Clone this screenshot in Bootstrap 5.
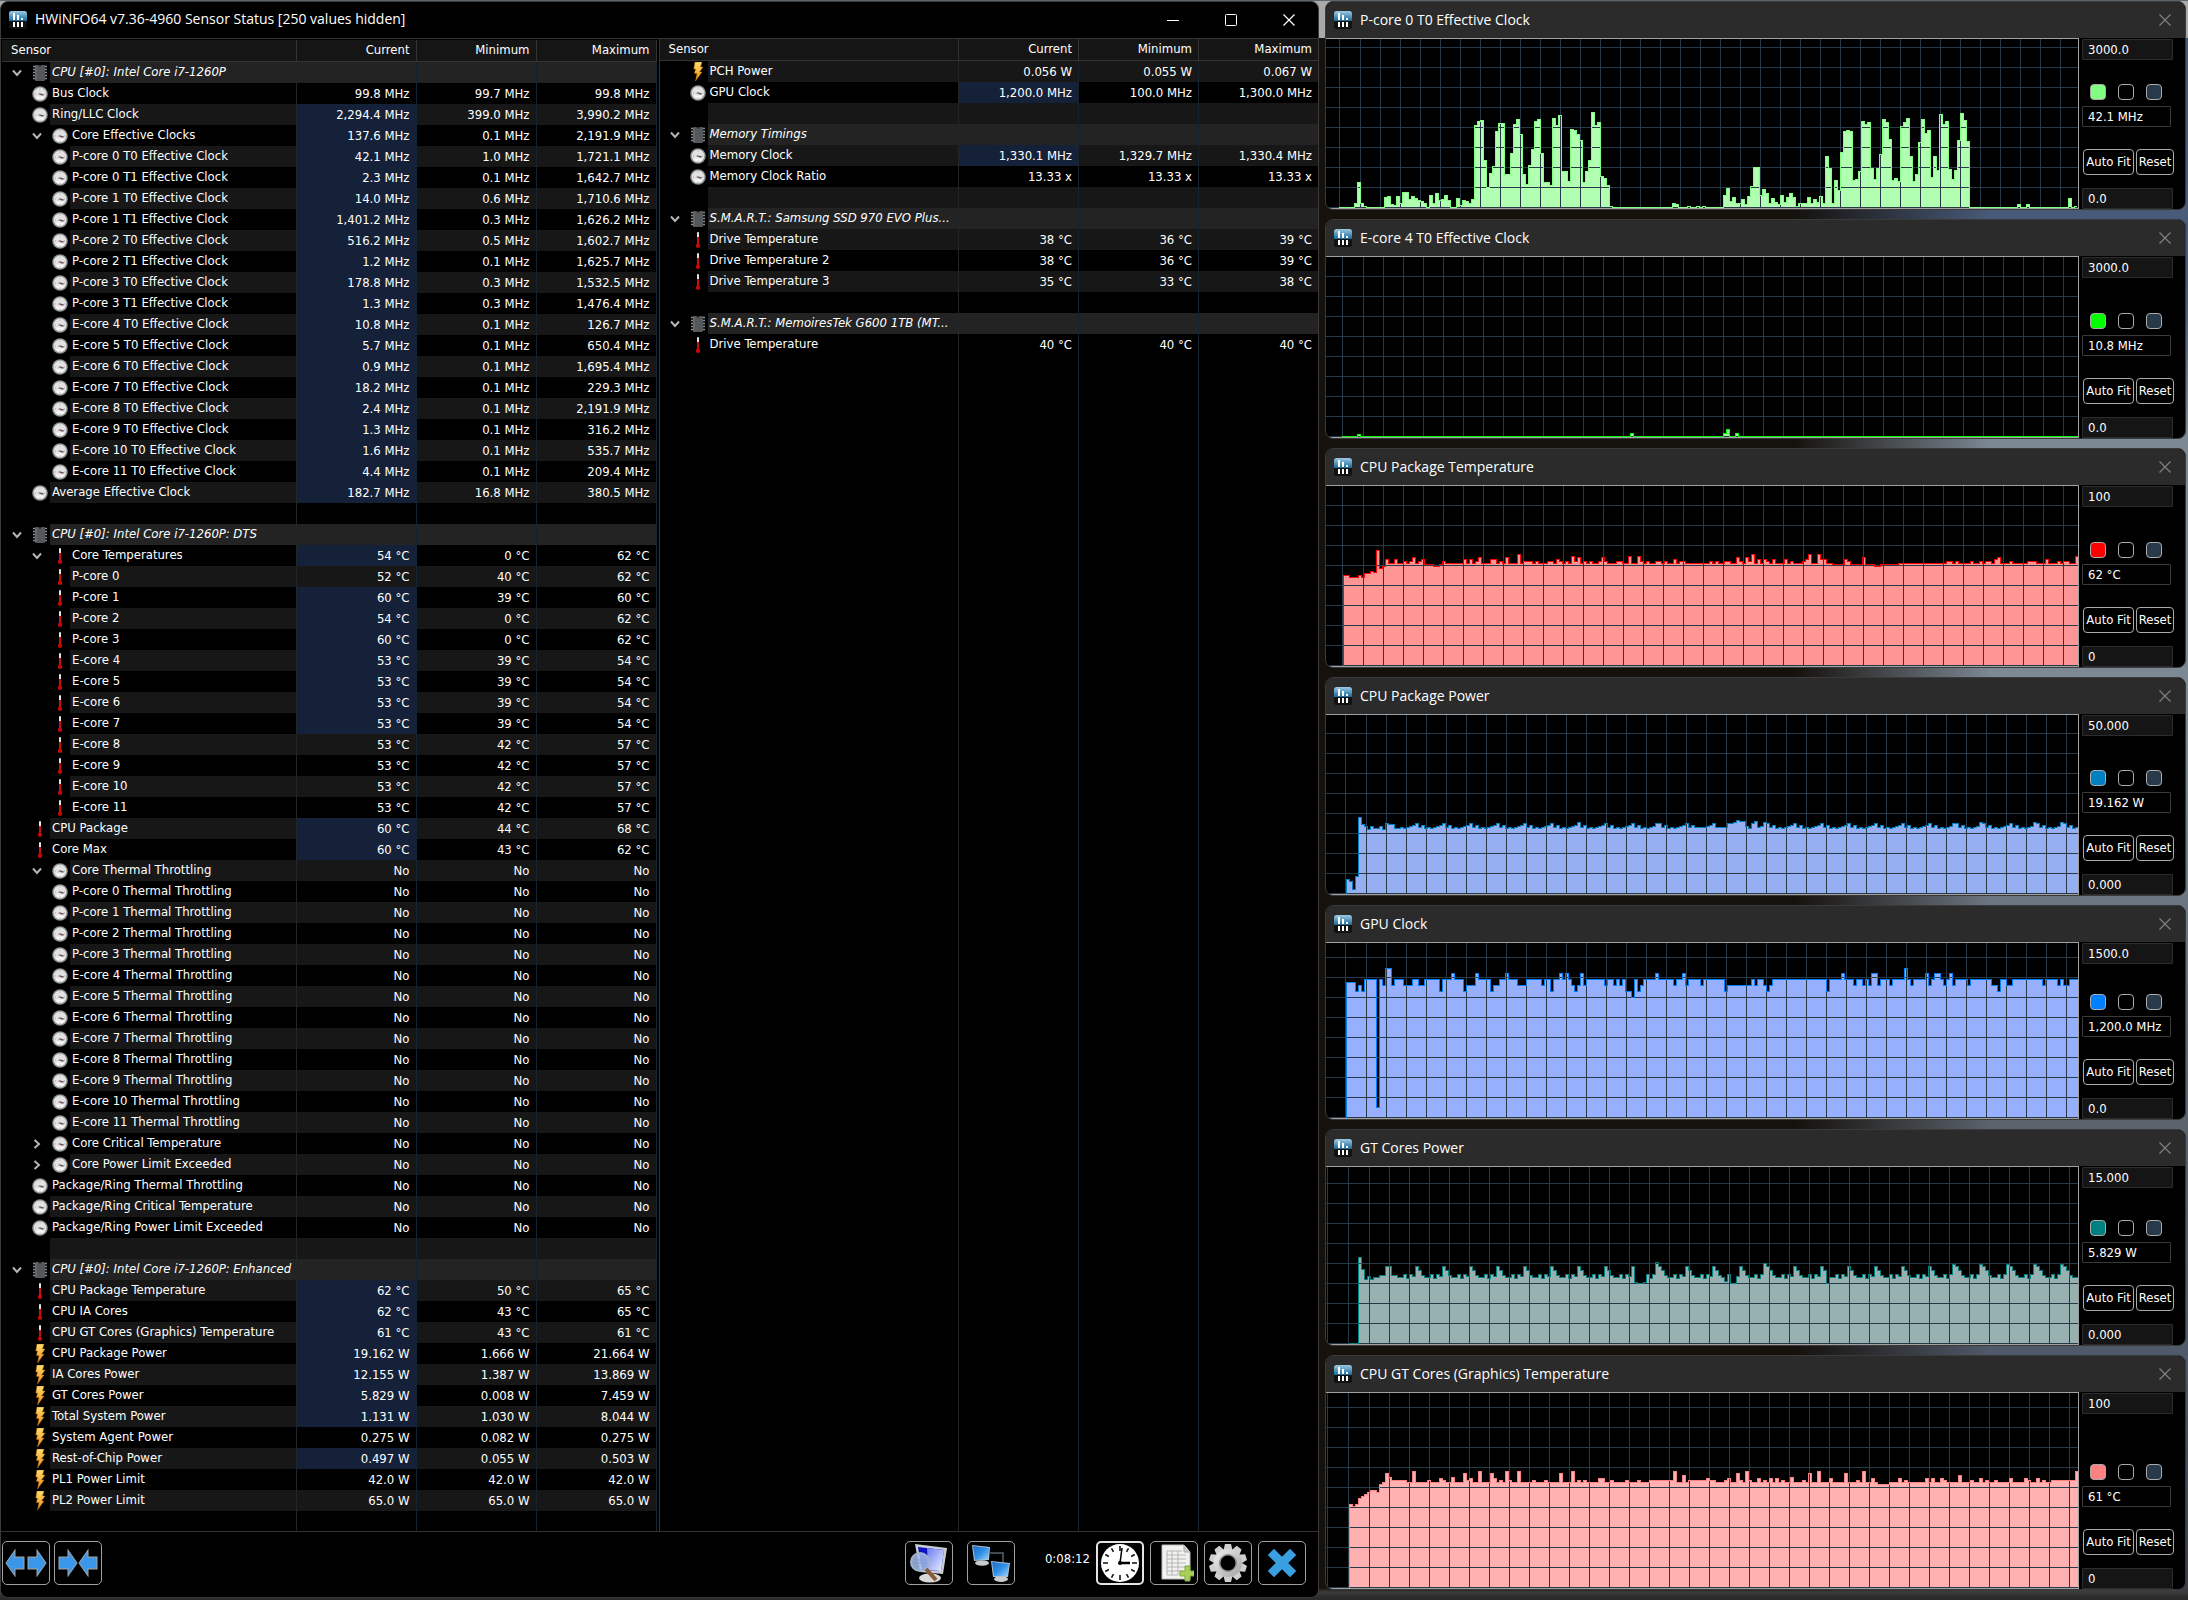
<!DOCTYPE html>
<html lang="en" data-bs-theme="dark">
<head>
<meta charset="utf-8">
<meta name="viewport" content="width=device-width, initial-scale=1">
<title>HWiNFO64 Sensor Status</title>
<link href="https://cdn.jsdelivr.net/npm/bootstrap@5.3.0/dist/css/bootstrap.min.css" rel="stylesheet">
<style>
:root{--ui:"DejaVu Sans Condensed","Noto Sans",sans-serif;--cap:"Open Sans","Noto Sans",sans-serif;--line:#333;--grid:#263847}
body{font-family:var(--ui);font-size:13px;line-height:20px;color:#fff;min-height:100vh;
  background:
   linear-gradient(#5d666c,#5d666c) 0 0/100% 1px no-repeat,
   linear-gradient(90deg,#a9a9a9,#a9a9a9) 0 0/100% 38px no-repeat,
   linear-gradient(#0000 0 1588px,#3c3c3c 1592px,#2a2a2a 1598px),
   linear-gradient(90deg,#15110d 0 82%,#15110d00 91%),
   linear-gradient(180deg,#44587a 90px,#4a5c78 300px,#7c8894 440px,#7c8894 700px,#5a626c 1130px,#50596a 1360px,#3c3c40 1600px)}
.desk{display:grid;grid-template-columns:minmax(0,1319fr) minmax(0,861fr);gap:6px;padding:1px 2px 0 0;align-items:start}
.win{background:#000;border:1px solid #3a3a3a;border-radius:8px;overflow:hidden}
.capbar{height:36px;font:14px/20px var(--cap);padding-left:8px}
.capbar h1,.capbar h2{font:inherit;margin:0}
.capbar h1{padding-bottom:2px}
.capbtn{background:none;border:0;padding:0 0 2px;color:inherit;height:36px}
.main-cap{color:#fff}
.main-cap .capbtn{width:58px}
.sub-cap{background:#2b2b2b;color:#808080}
.sub-cap .capbtn{width:40px}
.panes{border-top:1px solid var(--line);border-bottom:1px solid var(--line)}
.pane{flex:1 1 0;min-width:0}
.pane-a{flex:0 0 50%;padding:1px 2px 0 1px;border-right:1px solid var(--line)}
.sens{width:100%;height:100%;table-layout:fixed;border-collapse:separate;border-spacing:0}
.sens th{height:22px;background:#151515;border-right:1px solid var(--line);border-bottom:1px solid var(--line);font-weight:400;padding:0 6px 2px 9px;line-height:18px;text-align:right;width:120px}
.sens th:first-child{width:auto;text-align:left}
.sens td{height:21px;padding:0 6px 0 0;line-height:20px;border-right:1px solid #16222c;text-align:right;white-space:nowrap;overflow:hidden}
.sens td:first-child{padding:0;text-align:left;border-right-color:#20272c}
.sens tr.odd td:not(:first-child),.sens tr.odd .lbl{background:#171717}
.sens tr.grp td:not(:first-child),.sens tr.grp .lbl{background:#232323}
.sens tr.grp .lbl{font-style:italic}
.sens tr td.hot,.sens tr.odd td.hot{background:#152138}
.sens .fill td{height:auto}
#right th:last-child{width:119px}
#right th:last-child,#right td:last-child{border-right:0}
.spare{height:20px}
.gut{width:48px;padding-right:2px;flex:none}
.gut.deep{width:68px}
.lbl{height:21px;padding-left:2px;overflow:hidden}
.expander{background:none;border:0;padding:0;width:10px;height:20px;margin-right:10px;display:flex;align-items:center;color:#b5b5b5}
.tools{height:65px;padding:9px 12px 0 1px}
.toolset{gap:6px}
.toolbtn{width:48px;height:44px;background:#000;border:1px solid #a0a0a0;border-radius:5px;padding:0;display:flex;align-items:center;justify-content:center}
.toolbtn.lit{border:2px solid #e4e4e4}
.clockt{margin:8px 0 0 24px}
.rack{display:flex;flex-direction:column;gap:9px}
.h-a{height:209px}.h-b{height:220px}.h-c{height:219px}.h-d{height:215px}.h-e{height:217px}.h-f{height:235px}
.plot{flex:1 1 0;min-width:0;border:1px solid #a0a0a0;border-left:0}
.plot svg{display:block;width:100%;height:100%}
.ctl{width:106px;flex:none;padding:1px 0 0 3px}
.fld{width:91px;height:21px;background:#151515;border:1px solid #2c2c2c;border-radius:1px;color:#fff;padding:0 5px;font:13px/18px var(--ui)}
.fld.now{width:89px;background:#000;border-color:#3a3a3a;margin:6px 0 22px}
.sws{gap:12px}
.sw{width:16px;height:16px;border:1px solid #aaa;border-radius:4px;padding:0;background:#000}
.sw.gridc{background:#283a49}
.fitrow{gap:2px;margin-bottom:13px;padding-left:1px}
.mini{height:26px;border:1px solid #aaa;border-radius:4px;background:#000;color:#fff;padding:0;font:13px/22px var(--ui);white-space:nowrap}
.mini.fit{width:51px}.mini.rst{width:38px}
</style>
</head>
<body>
<svg width="0" height="0" class="position-absolute" aria-hidden="true">
 <defs>
  <linearGradient id="gBlue" x1="0" y1="0" x2="0" y2="1"><stop offset="0" stop-color="#9cc8e4"/><stop offset="1" stop-color="#176a9c"/></linearGradient>
  <linearGradient id="gGold" x1="0" y1="0" x2="0" y2="1"><stop offset="0" stop-color="#ffe070"/><stop offset="1" stop-color="#f08a10"/></linearGradient>
  <linearGradient id="gMon" x1="0" y1="0" x2="1" y2="1"><stop offset="0" stop-color="#1e6fc8"/><stop offset=".5" stop-color="#2f8fe6"/><stop offset="1" stop-color="#9fd4fa"/></linearGradient>
  <linearGradient id="gScr" x1="0" y1="0" x2="1" y2="1"><stop offset="0" stop-color="#6c7cf0"/><stop offset="1" stop-color="#eef2ff"/></linearGradient>
  <linearGradient id="gSteel" x1="0" y1="0" x2="1" y2="1"><stop offset="0" stop-color="#f2f2f2"/><stop offset="1" stop-color="#a2a2a2"/></linearGradient>
  <symbol id="i-app" viewBox="0 0 18 18"><rect width="18" height="18" rx="2.500" fill="#111"/><path d="M0 10V2.500A2.500 2.500 0 0 1 2.500 0h13A2.500 2.500 0 0 1 18 2.500V10z" fill="url(#gBlue)"/><path d="M4 2h2v7H4zM8 4h2v5H8zM12 7h2v2h-2zM4 11h2v5H4zM8 11h2v5H8zM12 11h2v5h-2z" fill="#fff"/></symbol>
  <symbol id="i-clock" viewBox="0 0 16 16"><circle cx="8" cy="8" r="7.800" fill="#8d8d8d"/><circle cx="8" cy="8" r="6.400" fill="#e2e2e2"/><path d="M3.500 10.500a5 5 0 0 0 9 0" fill="#f8f8f8"/><path d="M7 8l4.500 1" stroke="#705040" stroke-width="1.300" fill="none"/><circle cx="7.500" cy="8" r="1" fill="#999"/><path d="M8 2.500v1M3 8h1M12 8h1M8 12.500v1" stroke="#999" stroke-width=".8"/></symbol>
  <symbol id="i-temp" viewBox="0 0 16 16"><rect x="7" y="0" width="2" height="6" rx="1" fill="#e4e4e4"/><rect x="7" y="5" width="2" height="9" fill="#c81010"/><circle cx="8" cy="13.700" r="2.200" fill="#c40808"/></symbol>
  <symbol id="i-bolt" viewBox="0 0 16 19"><path d="M5 0h7l-1.500 5H13L9.500 10H12L5.500 19 7 11.500H4.500L5.500 7H3.800z" fill="url(#gGold)" stroke="#b86a10" stroke-width=".5"/></symbol>
  <symbol id="i-chip" viewBox="0 0 16 16"><path d="M1 1.500h14M1 4.500h14M1 7.500h14M1 10.500h14M1 13.500h14" stroke="#8b8b8b" stroke-width="1.400"/><rect x="3" y="0" width="10" height="16" rx="1" fill="#55585b"/><path d="M6.500 0a1.500 1.500 0 0 0 3 0z" fill="#222"/><path d="M4 1v14" stroke="#777"/></symbol>
  <symbol id="i-down" viewBox="0 0 10 10"><path d="M1 2.500l4 4.500 4-4.500" fill="none" stroke="currentColor" stroke-width="2"/></symbol>
  <symbol id="i-right" viewBox="0 0 10 10"><path d="M2.500 1l4.500 4-4.500 4" fill="none" stroke="currentColor" stroke-width="2"/></symbol>
  <symbol id="i-x" viewBox="0 0 12 12"><path d="M.5.5l11 11M11.500.5l-11 11" fill="none" stroke="currentColor" stroke-width="1.200"/></symbol>
 </defs>
</svg>

<div class="desk">
 <main class="win">
  <header class="capbar main-cap d-flex align-items-center">
   <svg width="18" height="18" aria-hidden="true"><use href="#i-app"/></svg>
   <h1 class="ms-2 me-auto">HWiNFO64 v7.36-4960 Sensor Status [250 values hidden]</h1>
   <button class="capbtn" aria-label="Minimize"><svg width="12" height="12"><path d="M0 6.500h12" stroke="#fff"/></svg></button>
   <button class="capbtn" aria-label="Maximize"><svg width="12" height="12"><rect x=".5" y=".5" width="11" height="11" rx="1" fill="none" stroke="#fff"/></svg></button>
   <button class="capbtn" aria-label="Close"><svg width="12" height="12"><use href="#i-x"/></svg></button>
  </header>
  <div class="panes d-flex">
   <section class="pane pane-a"><table class="sens" id="left"></table></section>
   <section class="pane"><table class="sens" id="right"></table></section>
  </div>
  <footer class="tools d-flex align-items-start">
   <button class="toolbtn" aria-label="Expand columns"><svg width="42" height="28" viewBox="0 0 42 24" preserveAspectRatio="none"><path d="M1 12L10 1v6h9v10h-9v6zM41 12L32 1v6h-9v10h9v6z" fill="#3a96e8" stroke="#9aa6b0"/></svg></button>
   <button class="toolbtn ms-1" aria-label="Shrink columns"><svg width="42" height="28" viewBox="0 0 42 24" preserveAspectRatio="none"><path d="M20 12L11 1v6H2v10h9v6zM22 12L31 1v6h9v10h-9v6z" fill="#3a96e8" stroke="#9aa6b0"/></svg></button>
   <div class="toolset ms-auto d-flex align-items-start">
    <button class="toolbtn me-2" aria-label="System summary"><svg width="38" height="40" viewBox="0 0 38 40"><ellipse cx="20" cy="35" rx="11" ry="4.500" fill="#d8d8d8"/><path d="M5 1l32 4-4 26-23-2z" fill="#c9ccd0"/><path d="M8 4l26 3-3 21-19-1z" fill="#0d10c0"/><path d="M17 5l17 2-3 21-13-1z" fill="url(#gScr)"/><circle cx="10" cy="19" r="9" fill="#a6bde8" fill-opacity=".85" stroke="#9fb4cc" stroke-width="2"/><path d="M16 26l10 11" stroke="#8a5a34" stroke-width="4"/><path d="M5 17h8M4 20h10" stroke="#7f98d8"/></svg></button>
    <button class="toolbtn" aria-label="Remote monitoring"><svg width="40" height="40" viewBox="0 0 40 40"><path d="M19 10h13v10" fill="none" stroke="#56616c" stroke-width="1.500"/><ellipse cx="11" cy="20" rx="7" ry="2.800" fill="#c8cccf"/><path d="M1 2l18 2-1 13-15 1z" fill="#aebfcd"/><path d="M2 3l16 2-1 11-13 1z" fill="url(#gMon)"/><ellipse cx="30" cy="36" rx="7" ry="3" fill="#c8cccf"/><path d="M20 18l19 2-2 14-15 0z" fill="#aebfcd"/><path d="M21 19l17 2-2 12-13 0z" fill="url(#gMon)"/></svg></button>
    <time class="clockt">0:08:12</time>
    <button class="toolbtn lit" aria-label="Reset clock"><svg width="40" height="40" viewBox="0 0 40 40"><circle cx="20" cy="20" r="19" fill="#fff"/><g stroke="#111" stroke-width="1.600"><path d="M20 3v5M20 32v5M3 20h5M32 20h5M11.500 5.300l2 3.500M28.500 5.300l-2 3.500M5.300 11.500l3.500 2M34.700 11.500l-3.500 2M5.300 28.500l3.500-2M34.700 28.500l-3.500-2M11.500 34.700l2-3.500M28.500 34.700l-2-3.500"/></g><path d="M20 20l2-15" stroke="#000" stroke-width="1.500"/><path d="M19 20h11" stroke="#000" stroke-width="2.500"/><circle cx="20" cy="20" r="2" fill="#000"/></svg></button>
    <button class="toolbtn" aria-label="Start logging"><svg width="40" height="40" viewBox="0 0 40 40"><path d="M8 2h22l6 7v27H8z" fill="#f2f2f0" stroke="#bbb"/><path d="M30 2v7h6" fill="#ccc" stroke="#aaa"/><path d="M13 8h15M13 12h19M13 16h19M13 20h19M13 24h19M13 28h15M13 8v24M18 8v24M24 8v24M13 32h11" stroke="#b4b4b4" fill="none"/><path d="M31 23h5v5h5v5h-5v5h-5v-5h-5v-5h5z" fill="#a9cf5a" stroke="#7fa838"/></svg></button>
    <button class="toolbtn" aria-label="Settings"><svg width="40" height="40" viewBox="-20 -20 40 40"><g fill="#cfcfcf"><g id="cogt"><path d="M-3-19h6l2 8H-5zM-3 19h6l2-8H-5z"/></g><use href="#cogt" transform="rotate(36)"/><use href="#cogt" transform="rotate(72)"/><use href="#cogt" transform="rotate(108)"/><use href="#cogt" transform="rotate(144)"/></g><circle r="14" fill="url(#gSteel)"/><circle r="9" fill="#8c8c8c"/><circle r="7.500" fill="#000"/></svg></button>
    <button class="toolbtn" aria-label="Close sensors"><svg width="30" height="30" viewBox="0 0 30 30"><path d="M7 1l8 8 8-8 6 6-8 8 8 8-6 6-8-8-8 8-6-6 8-8-8-8z" fill="#3a9fe0" stroke="#2476ae"/></svg></button>
   </div>
  </footer>
 </main>
 <aside class="rack" id="rack"></aside>
</div>

<script src="https://cdn.jsdelivr.net/npm/bootstrap@5.3.0/dist/js/bootstrap.bundle.min.js"></script>
<script>
// kind | level | name | current | minimum | maximum ; "*" before current = recently changed
// kinds: g group, c clock, t temperature, p power, "-" blank; o / s = open / shut expander
const unit = u => a => a.map(r => { const p = r.split('|'); return [...p.slice(0, 3), ...p.slice(3).map(v => v + ' ' + u)].join('|'); });
const MHZ = unit('MHz'), DEG = unit('°C'), WATT = unit('W');
const NO = (a) => a.map(r => r + '|No|No|No');
const left = [
 'g|0|CPU [#0]: Intel Core i7-1260P',
 ...MHZ(['c|0|Bus Clock|99.8|99.7|99.8','c|0|Ring/LLC Clock|*2,294.4|399.0|3,990.2','co|1|Core Effective Clocks|*137.6|0.1|2,191.9',
 'c|1|P-core 0 T0 Effective Clock|*42.1|1.0|1,721.1','c|1|P-core 0 T1 Effective Clock|*2.3|0.1|1,642.7','c|1|P-core 1 T0 Effective Clock|*14.0|0.6|1,710.6',
 'c|1|P-core 1 T1 Effective Clock|*1,401.2|0.3|1,626.2','c|1|P-core 2 T0 Effective Clock|*516.2|0.5|1,602.7','c|1|P-core 2 T1 Effective Clock|*1.2|0.1|1,625.7',
 'c|1|P-core 3 T0 Effective Clock|*178.8|0.3|1,532.5','c|1|P-core 3 T1 Effective Clock|*1.3|0.3|1,476.4','c|1|E-core 4 T0 Effective Clock|*10.8|0.1|126.7',
 'c|1|E-core 5 T0 Effective Clock|*5.7|0.1|650.4','c|1|E-core 6 T0 Effective Clock|*0.9|0.1|1,695.4','c|1|E-core 7 T0 Effective Clock|*18.2|0.1|229.3',
 'c|1|E-core 8 T0 Effective Clock|*2.4|0.1|2,191.9','c|1|E-core 9 T0 Effective Clock|*1.3|0.1|316.2','c|1|E-core 10 T0 Effective Clock|*1.6|0.1|535.7',
 'c|1|E-core 11 T0 Effective Clock|*4.4|0.1|209.4','c|0|Average Effective Clock|*182.7|16.8|380.5']),
 '-','g|0|CPU [#0]: Intel Core i7-1260P: DTS',
 ...DEG(['to|1|Core Temperatures|*54|0|62','t|1|P-core 0|52|40|62','t|1|P-core 1|*60|39|60','t|1|P-core 2|*54|0|62','t|1|P-core 3|*60|0|62',
 't|1|E-core 4|*53|39|54','t|1|E-core 5|*53|39|54','t|1|E-core 6|*53|39|54','t|1|E-core 7|*53|39|54','t|1|E-core 8|53|42|57','t|1|E-core 9|53|42|57',
 't|1|E-core 10|53|42|57','t|1|E-core 11|53|42|57','t|0|CPU Package|*60|44|68','t|0|Core Max|*60|43|62']),
 ...NO(['co|1|Core Thermal Throttling','c|1|P-core 0 Thermal Throttling','c|1|P-core 1 Thermal Throttling','c|1|P-core 2 Thermal Throttling','c|1|P-core 3 Thermal Throttling',
 'c|1|E-core 4 Thermal Throttling','c|1|E-core 5 Thermal Throttling','c|1|E-core 6 Thermal Throttling','c|1|E-core 7 Thermal Throttling','c|1|E-core 8 Thermal Throttling',
 'c|1|E-core 9 Thermal Throttling','c|1|E-core 10 Thermal Throttling','c|1|E-core 11 Thermal Throttling','cs|1|Core Critical Temperature','cs|1|Core Power Limit Exceeded',
 'c|0|Package/Ring Thermal Throttling','c|0|Package/Ring Critical Temperature','c|0|Package/Ring Power Limit Exceeded']),
 '-','g|0|CPU [#0]: Intel Core i7-1260P: Enhanced',
 ...DEG(['t|0|CPU Package Temperature|*62|50|65','t|0|CPU IA Cores|*62|43|65','t|0|CPU GT Cores (Graphics) Temperature|*61|43|61']),
 ...WATT(['p|0|CPU Package Power|*19.162|1.666|21.664','p|0|IA Cores Power|*12.155|1.387|13.869','p|0|GT Cores Power|*5.829|0.008|7.459','p|0|Total System Power|*1.131|1.030|8.044',
 'p|0|System Agent Power|0.275|0.082|0.275','p|0|Rest-of-Chip Power|*0.497|0.055|0.503','p|0|PL1 Power Limit|42.0|42.0|42.0','p|0|PL2 Power Limit|65.0|65.0|65.0'])
];
const right = [
 'p|0|PCH Power|0.056 W|0.055 W|0.067 W',...MHZ(['c|0|GPU Clock|*1,200.0|100.0|1,300.0']),'-','g|0|Memory Timings',
 ...MHZ(['c|0|Memory Clock|*1,330.1|1,329.7|1,330.4']),'c|0|Memory Clock Ratio|13.33 x|13.33 x|13.33 x','-',
 'g|0|S.M.A.R.T.: Samsung SSD 970 EVO Plus...',...DEG(['t|0|Drive Temperature|38|36|39','t|0|Drive Temperature 2|38|36|39','t|0|Drive Temperature 3|35|33|38']),'-',
 'g|0|S.M.A.R.T.: MemoiresTek G600 1TB (MT...',...DEG(['t|0|Drive Temperature|40|40|40'])
];
const ICON = {g:'chip', c:'clock', t:'temp', p:'bolt'};
const use = (id, w, h) => `<svg width="${w}" height="${h}" aria-hidden="true"><use href="#i-${id}"/></svg>`;
function fillTable(id, rows, spare) {
  let out = '<thead><tr><th scope="col">Sensor</th><th scope="col">Current</th><th scope="col">Minimum</th><th scope="col">Maximum</th></tr></thead><tbody>';
  rows.forEach((r, i) => {
    const [k, lv, name = '', ...v] = r.split('|');
    const cls = k === 'g' ? 'grp' : i % 2 ? '' : 'odd';
    const exp = k === 'g' || k[1] === 'o' ? 'down' : k[1] === 's' ? 'right' : '';
    const gut = `<div class="gut ${lv === '1' ? 'deep' : ''} d-flex align-items-center justify-content-end">` +
      (exp ? `<button class="expander" aria-label="Toggle ${name}">${use(exp, 10, 10)}</button>` : '') +
      (ICON[k[0]] ? use(ICON[k[0]], 16, k[0] === 'p' ? 19 : 16) : '') + '</div>';
    out += `<tr class="${cls}"><td><div class="d-flex">${gut}<div class="lbl flex-fill">${name}</div></div></td>` +
      [0, 1, 2].map(c => { const t = v[c] || ''; return `<td${t[0] === '*' ? ' class="hot"' : ''}>${t.replace('*', '')}</td>`; }).join('') + '</tr>';
  });
  out += `<tr class="fill"><td>${spare ? '<div class="spare"></div>' : ''}</td><td></td><td></td><td></td></tr></tbody>`;
  document.getElementById(id).innerHTML = out;
}
fillTable('left', left, true);
fillTable('right', right, false);

// Histories. "runs" is a plain list (height or height*count per sample);
// "steps" is "time:height ..." with SPAN time units per sample.
const SPAN = 5.36;
const runs = s => s.split(' ').flatMap(t => { const [h, n = 1] = t.split('*').map(Number); return Array(n).fill(h); });
function steps(t0, n, s) {
  const a = [], p = s.split(' ').map(q => q.split(':').map(Number));
  for (let i = 0, j = 0; i < n; i++) { while (j + 1 < p.length && Math.round((p[j + 1][0] - t0) / SPAN) <= i) j++; a.push(p[j][1]); }
  return a;
}
function spikes(t0, a, s) { s.split(' ').forEach(q => { const [t, h] = q.split(':').map(Number); const i = Math.floor((t - t0) / SPAN); if (i >= 0 && i < a.length) a[i] = h; }); return a; }
const wave = (n, pat, off) => Array.from({length: n}, (_, i) => pat[(i + off) % pat.length]);

const pcore = runs('0*5 4 25 4 1 0*6 10 11 3 2 11 4 15*2 8 11 9 7 6 4 0 12 4 14 7 8 12 7 0*2 9 2 7 6 4 8 82 86 87 47 20 34 41 76 84*2 33*2 54 83 88 73 33 23 42 58 86 88 54 25*2 22 89 82 92 36*2 26 78 77 73 67 25 36 47 95 82 85 31 29 22 1 0*20 4 3 0*3 1 0*2 1 0 1 0*6 12 19 6 10 4*2 8 3 11 21 40*2 12 18 14 4 9 5 3 12 5 10 14 10 1 4*3 10 4 8 5 11 4 51 39 4 27 17 55 76 77 76 27 28 36 86 83 85 39 28 39 53 88 85 68 27 29 26 81 85 89 51 26 33 65 88 74 77 30 51 37 93 83 86 38 28 37 67 94 87 66 0*16 3 0*2 3 0*13 9 0 1');
const ecore = Array(246).fill(0); [[5,2],[96,3],[127,3],[128,7],[131,3]].forEach(([i, h]) => ecore[i] = h);
const pkgT = spikes(59, steps(59, 245, '59:90 69:88 87:90 90:88 96:92 108:94 112:93 118:115 122:97 129:99 134:106 140:102 204:101 218:99 230:101 240:102 930:101 1010:99 1021:101 1050:102'),
 '152:106 168:104 178:104 185:108 195:104 201:106 238:104 277:106 287:106 297:104 302:108 324:106 329:106 340:104 350:108 372:111 382:104 388:104 393:104 404:104 427:104 432:104 443:106 448:104 458:104 468:109 473:104 479:108 490:104 500:104 517:104 522:108 527:104 548:104 553:104 570:109 587:109 592:104 603:104 617:104 623:104 635:104 651:106 664:104 670:104 715:104 725:104 742:104 747:104 763:108 769:104 779:108 785:104 790:111 801:106 813:106 820:104 828:106 848:106 860:104 880:104 886:106 891:111 907:111 913:106 918:106 956:106 961:104 988:108 1138:104 1144:104 1155:104 1180:104 1197:104 1208:104 1213:104 1223:106 1229:108 1250:104 1285:104 1290:104 1296:104 1315:106 1340:104 1350:104 1356:104 1369:109');
const pkgP = spikes(64, wave(244, [66,65,66,67,68,70,66,68,65], 0),
 '65:14 70:12 76:4 83:17 88:76 93:69 98:67 103:64 108:67 114:65 119:65 125:67 130:64 137:70 142:69 147:69 152:65 478:71 618:70 688:66 693:66 699:66 730:66 735:66 747:70 752:70 757:71 763:73 768:72 773:72 779:67 790:70 795:72 812:71 1149:70 1197:71 1294:71 1342:71');
const gpu = steps(64, 244, '64:135 80:126 87:132 92:126 97:138 117:10 124:138 129:132 135:149 145:132 151:138 166:132 182:138 193:132 205:138 230:126 237:138 252:144 257:138 272:126 279:132 296:144 300:138 320:126 328:132 337:138 349:144 354:138 368:132 387:138 413:132 420:138 427:126 435:138 446:144 450:138 456:144 461:138 464:132 470:126 478:132 483:144 488:132 493:138 525:132 532:138 540:132 546:138 550:132 556:138 565:126 572:120 578:138 583:126 589:132 596:138 616:144 621:138 647:132 653:138 665:144 670:132 675:138 696:132 703:138 739:126 745:132 788:138 793:132 798:138 808:132 814:126 822:132 826:138 921:126 928:138 948:144 953:138 968:132 977:138 984:132 990:138 995:132 1001:144 1012:132 1018:138 1033:132 1040:138 1061:149 1066:138 1070:132 1078:138 1099:144 1104:132 1108:138 1115:144 1125:138 1131:132 1138:138 1142:144 1147:132 1152:138 1172:132 1180:138 1217:132 1226:126 1233:138 1243:132 1254:138 1306:132 1312:138 1333:132 1340:138 1345:132 1354:138');
const gtP = spikes(69, wave(243, [67,77,73,68,66,66,69,65,69], 6),
 '70:0 76:0 81:0 88:86 93:74 98:64 103:67 109:64 114:66 119:66 125:68 130:68 137:77 142:77 147:68 583:61 588:60 594:60 599:61 618:81 744:62 751:60 757:60 811:80 922:60 1149:79 1197:79 1245:79 1294:79 1342:79');
const gtT = spikes(69, steps(69, 243, '69:83 74:81 80:83 87:89 91:91 96:93 101:95 107:97 117:95 124:103 130:105 135:114 139:110 144:107 170:105 605:107 655:105 675:107 725:105 1010:103 1035:105 1325:107'),
 '183:116 210:107 233:109 238:107 255:110 276:114 281:107 286:109 302:116 324:114 329:109 340:107 350:116 356:107 372:116 400:107 420:107 447:114 468:116 480:107 490:107 515:109 521:109 540:107 565:107 585:107 651:116 667:112 710:109 740:107 748:109 763:114 769:107 779:116 785:107 800:109 809:107 820:109 833:109 845:107 859:110 880:107 891:114 907:116 930:109 956:114 975:107 988:116 1005:109 1052:109 1065:107 1100:109 1112:109 1125:109 1135:107 1160:112 1180:107 1197:109 1208:107 1225:107 1250:109 1275:109 1285:107 1300:109 1310:107 1369:116');

const charts = [
 {t:'P-core 0 T0 Effective Clock', s:'h-a', h:169, x:13, gx:13, c:'#80ff80', f:'#b1ffb1', d:pcore, hi:'3000.0', now:'42.1 MHz', lo:'0.0'},
 {t:'E-core 4 T0 Effective Clock', s:'h-b', h:180, x:16, gx:16, c:'#00ff00', f:'#96ff96', d:ecore, hi:'3000.0', now:'10.8 MHz', lo:'0.0'},
 {t:'CPU Package Temperature', s:'h-b', h:180, x:17, gx:16, c:'#ff0000', f:'#ff9696', d:pkgT, hi:'100', now:'62 °C', lo:'0'},
 {t:'CPU Package Power', s:'h-c', h:179, x:20, gx:19, c:'#0080c0', f:'#96aff2', d:pkgP, hi:'50.000', now:'19.162 W', lo:'0.000'},
 {t:'GPU Clock', s:'h-d', h:175, x:20, gx:19, c:'#0080ff', f:'#96afff', d:gpu, hi:'1500.0', now:'1,200.0 MHz', lo:'0.0'},
 {t:'GT Cores Power', s:'h-e', h:177, x:23, gx:22, c:'#008080', f:'#97b0b0', d:gtP, hi:'15.000', now:'5.829 W', lo:'0.000'},
 {t:'CPU GT Cores (Graphics) Temperature', s:'h-f', h:195, x:23, gx:22, c:'#ff8080', f:'#ffb0b0', d:gtT, hi:'100', now:'61 °C', lo:'0'}
];
const W = 752;
document.getElementById('rack').innerHTML = charts.map((c, n) => {
  const base = c.h - .5;
  let line = `M${c.x} ${base}`;
  c.d.forEach((v, i) => { line += `V${base - v}H${Math.min(W, c.x + (i + 1) * 3)}`; });
  let grid = `M${c.gx + .5} 0V${c.h}`;
  for (let x = c.gx + 21.5; x < W; x += 20) grid += `M${x} 0V${c.h}`;
  if (c.gx > 20) grid += `M1.5 0V${c.h}`;
  for (let y = base; y > 0; y -= 20) grid += `M0 ${y}H${W}`;
  return `<section class="win ${c.s} d-flex flex-column">
   <header class="capbar sub-cap d-flex align-items-center flex-shrink-0">${use('app', 18, 18)}
    <h2 class="ms-2 me-auto">${c.t}</h2><button class="capbtn" aria-label="Close ${c.t}">${use('x', 12, 12)}</button></header>
   <div class="d-flex flex-fill">
    <div class="plot d-flex"><svg viewBox="0 0 ${W} ${c.h}" preserveAspectRatio="none" shape-rendering="crispEdges" role="img" aria-label="${c.t} history">
     <path d="${line}V${c.h}H${c.x}z" fill="${c.f}"/><path d="${grid}" stroke="#283947" fill="none"/><path d="${line}" stroke="${c.c}" fill="none"/></svg></div>
    <div class="ctl d-flex flex-column">
     <input class="fld" id="hi${n}" aria-label="${c.t} upper limit" value="${c.hi}">
     <div class="sws d-flex mt-auto ms-2"><button class="sw" aria-label="Line colour"></button><button class="sw" aria-label="Background colour"></button><button class="sw gridc" aria-label="Grid colour"></button></div>
     <input class="fld now" readonly aria-label="${c.t} current value" value="${c.now}">
     <div class="d-flex fitrow"><button class="mini fit">Auto Fit</button><button class="mini rst">Reset</button></div>
     <input class="fld lo" id="lo${n}" aria-label="${c.t} lower limit" value="${c.lo}">
    </div>
   </div></section>`;
}).join('');
document.querySelectorAll('#rack .win').forEach((w, i) => { w.querySelector('.sw').style.backgroundColor = charts[i].c; });
</script>
</body>
</html>
